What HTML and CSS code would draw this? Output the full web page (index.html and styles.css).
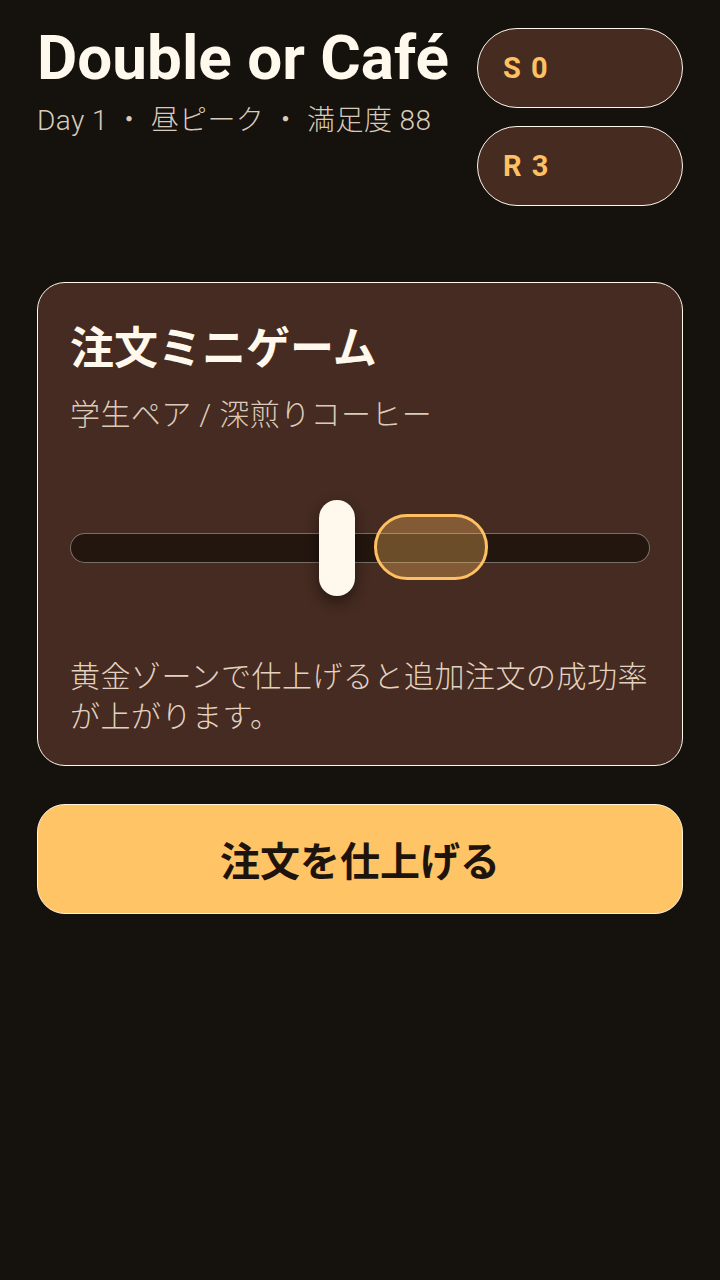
FILE: index.html
```html
<!DOCTYPE html>
<html lang="ja">
<head>
    <meta charset="UTF-8">
    <meta name="viewport" content="width=device-width, initial-scale=1.0">
    <title>Double or Café</title>
    <link rel="stylesheet" href="styles.css">
</head>
<body>
    <div class="app">
        <header class="top">
            <div class="heading">
                <h1>Double or Café</h1>
                <p class="meta">Day 1 ・ 昼ピーク ・ 満足度 88</p>
            </div>
            <div class="stats">
                <div class="pill">S 0</div>
                <div class="pill">R 3</div>
            </div>
        </header>

        <section class="card">
            <h2>注文ミニゲーム</h2>
            <p class="order">学生ペア / 深煎りコーヒー</p>
            <div class="meter">
                <div class="track"></div>
                <div class="zone" style="left: 52.4%; width: 19.6%;"></div>
                <div class="thumb" style="left: 42.9%;"></div>
            </div>
            <p class="hint">黄金ゾーンで仕上げると追加注文の成功率が上がります。</p>
        </section>

        <button class="finish">注文を仕上げる</button>
    </div>
</body>
</html>
```

FILE: styles.css
```css
body { margin: 0; background: #15110d; color: #fff8ec; font-family: Roboto, "Noto Sans CJK JP", sans-serif; }
.app { padding: 28px 37px; display: flex; flex-direction: column; }

.top { display: flex; justify-content: space-between; align-items: flex-start; }
h1 { margin: 0; font-size: 62px; line-height: 60px; font-weight: 700; }
.meta { margin: 15px 0 0; font-size: 28px; line-height: 36px; font-weight: 300; letter-spacing: 0.4px; color: #d9cab9; }
.stats { display: flex; flex-direction: column; gap: 18px; }
.pill { width: 206px; height: 80px; box-sizing: border-box; display: flex; align-items: center; padding-left: 25px; background: #452b20; border: 1.5px solid #fff8ec; border-radius: 40px; color: #ffc062; font-size: 29px; font-weight: 700; letter-spacing: 1.5px; }

.card { margin-top: 76px; padding: 38px 32px 28px; background: #452b21; border: 1.5px solid #fff8ec; border-radius: 28px; }
h2 { margin: 0; font-size: 44px; line-height: 56px; font-weight: 700; }
.order { margin: 18px 0 0; font-size: 30px; line-height: 40px; font-weight: 300; letter-spacing: 0.4px; color: #dccab8; }
.meter { position: relative; height: 96px; margin-top: 65px; }
.track { position: absolute; left: 0; right: 0; top: 33px; height: 30px; box-sizing: border-box; background: #23160f; border: 1px solid rgba(255, 248, 236, 0.4); border-radius: 15px; }
.zone { position: absolute; top: 14px; height: 66px; box-sizing: border-box; background: rgba(255, 192, 98, 0.33); border: 3px solid #ffc062; border-radius: 33px; }
.thumb { position: absolute; top: 0; width: 36px; height: 96px; background: #fff8ec; border-radius: 18px; box-shadow: 0 6px 14px rgba(0, 0, 0, 0.45); }
.hint { margin: 61px 0 0; font-size: 30px; line-height: 40px; font-weight: 300; letter-spacing: 0.5px; color: #e3d2c0; }

.finish { margin-top: 38px; height: 110px; background: #ffc466; color: #1f140d; border: 1.5px solid #fff3dc; border-radius: 28px; font-family: Roboto, "Noto Sans CJK JP", sans-serif; font-size: 40px; font-weight: 700; cursor: pointer; }
```
